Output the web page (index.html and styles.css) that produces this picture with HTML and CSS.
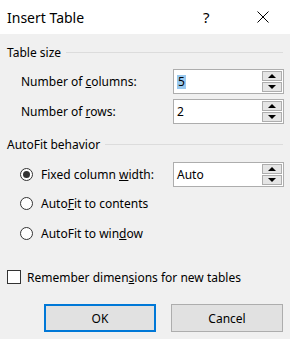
FILE: index.html
```html
<!DOCTYPE html>
<html>
<head>
<meta charset="utf-8">
<link rel="stylesheet" href="styles.css">
</head>
<body>
<div class="dialog">
  <header class="titlebar">
    <span class="title">Insert Table</span>
    <span class="help">?</span>
    <span class="close">
      <svg width="12" height="12" viewBox="0 0 12 12"><path d="M0.5 0.5 L11.5 11.5 M11.5 0.5 L0.5 11.5" stroke="#000" stroke-width="1" fill="none"/></svg>
    </span>
  </header>
  <main class="content">
    <div class="group-head"><span>Table size</span><span class="rule"></span></div>
    <div class="field-row first">
      <span class="label"><span>Number of <u>c</u>olumns:</span></span>
      <div class="spin">
        <span class="value"><span class="sel">5</span></span>
        <span class="buttons"><span class="btn up"></span><span class="btn down"></span></span>
      </div>
    </div>
    <div class="field-row second">
      <span class="label"><span>Number of <u>r</u>ows:</span></span>
      <div class="spin">
        <span class="value"><span>2</span></span>
        <span class="buttons"><span class="btn up"></span><span class="btn down"></span></span>
      </div>
    </div>

    <div class="group-head auto-head"><span>AutoFit behavior</span><span class="rule"></span></div>
    <div class="field-row radio-first">
      <span class="label"><span class="radio checked"></span><span>Fixed column <u>w</u>idth:</span></span>
      <div class="spin">
        <span class="value"><span>Auto</span></span>
        <span class="buttons"><span class="btn up"></span><span class="btn down"></span></span>
      </div>
    </div>
    <div class="radio-row r2"><span class="radio"></span><span>Auto<u>F</u>it to contents</span></div>
    <div class="radio-row"><span class="radio"></span><span>AutoFit to win<u>d</u>ow</span></div>

    <div class="check-row"><span class="checkbox"></span><span>Remember dimen<u>s</u>ions for new tables</span></div>

    <div class="actions">
      <button class="button default">OK</button>
      <button class="button">Cancel</button>
    </div>
  </main>
</div>
</body>
</html>
```

FILE: styles.css
```css
* { box-sizing: border-box; }
html, body { margin: 0; padding: 0; }
body {
  width: 290px;
  height: 339px;
  background: #f0f0f0;
  font-family: "Noto Sans", "Open Sans", sans-serif;
  font-size: 12px;
  color: #000;
  overflow: hidden;
}
.dialog { width: 290px; height: 339px; display: flex; flex-direction: column; }
.titlebar {
  height: 34px;
  background: #fff;
  display: flex;
  align-items: center;
  padding-left: 7px;
}
.title { font-size: 14px; flex: 1; }
.help { font-size: 15px; width: 6px; margin-right: 48px; }
.close { width: 12px; height: 12px; margin-right: 21px; display: flex; }
.content { padding: 10px 6px 0 7px; display: flex; flex-direction: column; }
.group-head { display: flex; align-items: center; height: 16px; gap: 5px; }
.group-head .rule { flex: 1; height: 1px; background: #dcdcdc; margin-right: 1px; }
.field-row { display: flex; align-items: center; justify-content: space-between; height: 25px; padding-left: 14px; }
.field-row.first { margin-top: 9px; }
.field-row.second { margin-top: 5px; }
.auto-head { margin-top: 12px; }
.field-row.radio-first { margin-top: 10px; padding-left: 13px; }
.label { display: flex; align-items: center; white-space: pre; }
.spin {
  width: 111px;
  height: 25px;
  border: 1px solid #adadad;
  background: #fff;
  display: flex;
  align-items: stretch;
}
.value { flex: 1; display: flex; align-items: center; padding-left: 3px; }
.sel { background: #99c9ef; padding: 0 1px; line-height: 14px; }
.buttons { width: 20px; display: flex; flex-direction: column; gap: 1px; margin: 1px 1px 1px 0; }
.btn { flex: 1; border: 1px solid #adadad; background: #e5e5e5; display: flex; align-items: center; justify-content: center; }
.btn::after { content: ""; width: 0; height: 0; border-left: 4px solid transparent; border-right: 4px solid transparent; }
.btn.up::after { border-bottom: 4px solid #000; }
.btn.down::after { border-top: 4px solid #000; }
.radio {
  width: 13px; height: 13px; border-radius: 50%;
  border: 1px solid #333; background: #fff;
  margin-right: 8px; flex: none;
  display: inline-flex; align-items: center; justify-content: center;
}
.radio.checked::after { content: ""; width: 7px; height: 7px; border-radius: 50%; background: #333; }
.radio-row { display: flex; align-items: center; height: 30px; padding-left: 13px; }
.radio-row.r2 { margin-top: 1px; }
.check-row { display: flex; align-items: center; height: 16px; margin-top: 21px; }
.checkbox { width: 14px; height: 14px; border: 1px solid #333; background: #fff; margin-right: 6px; flex: none; }
.actions { display: flex; justify-content: flex-end; gap: 15px; margin-top: 19px; padding-right: 1px; }
.button {
  width: 112px; height: 28px;
  background: #e1e1e1;
  border: 1px solid #adadad;
  font: inherit; color: #000;
  padding: 0;
}
.button.default { border: 2px solid #0078d7; }
```
